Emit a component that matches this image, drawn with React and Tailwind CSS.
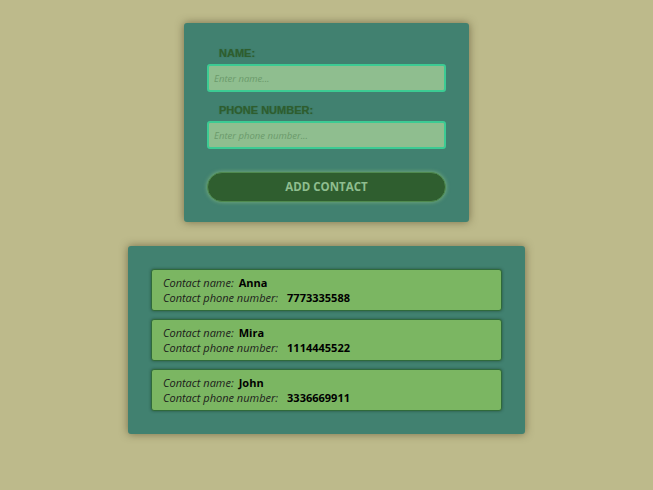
const contacts = [
  { id: 1, name: 'Anna', phone: '7773335588' },
  { id: 2, name: 'Mira', phone: '1114445522' },
  { id: 3, name: 'John', phone: '3336669911' },
]

export default function App() {
  return (
    <div className="min-h-[490px] bg-[#bdba8b] pt-[23px] flex flex-col items-center gap-[24px] font-['Open_Sans',sans-serif]">
      <form className="w-[285px] bg-[#418170] rounded-[3px] shadow-[0_0_8px_rgba(60,50,20,0.55)] px-[23px] pt-[23px] pb-[20px] flex flex-col">
        <label className="pl-3 text-[11px] leading-[14px] font-bold text-[#2e5e2e] font-['Liberation_Sans',Arial,sans-serif] [text-shadow:0_0_1px_rgba(40,80,40,0.5)] mb-[4px]">
          NAME:
        </label>
        <input
          type="text"
          placeholder="Enter name..."
          className="h-[28px] w-full bg-[#8fbe8f] border-2 border-[#3ccb93] rounded-[3px] px-[5px] text-[9.5px] italic font-['Open_Sans',sans-serif] placeholder:text-[#6b9a6b] outline-none"
        />
        <label className="mt-[11px] pl-3 text-[11px] leading-[14px] font-bold text-[#2e5e2e] font-['Liberation_Sans',Arial,sans-serif] [text-shadow:0_0_1px_rgba(40,80,40,0.5)] mb-[4px]">
          PHONE NUMBER:
        </label>
        <input
          type="text"
          placeholder="Enter phone number..."
          className="h-[28px] w-full bg-[#8fbe8f] border-2 border-[#3ccb93] rounded-[3px] px-[5px] text-[9.5px] italic font-['Open_Sans',sans-serif] placeholder:text-[#6b9a6b] outline-none"
        />
        <button
          type="button"
          className="mt-[23px] h-[30px] w-full rounded-full bg-[#2f5e2f] border border-[#4f8a4f] shadow-[0_0_4px_rgba(150,200,130,0.7)] text-[11.5px] font-bold text-[#8fbe8f]"
        >
          ADD CONTACT
        </button>
      </form>

      <div className="w-[397px] bg-[#418170] rounded-[3px] shadow-[0_0_8px_rgba(60,50,20,0.55)] p-[23px] flex flex-col gap-[8px]">
        {contacts.map((c) => (
          <div
            key={c.id}
            className="bg-[#7bb662] border border-[#2f6a3a] rounded-[3px] shadow-[0_0_3px_rgba(20,50,30,0.6)] px-[11px] py-[5px] text-[11px] leading-[15px] text-black"
          >
            <p>
              <span className="italic text-[#1b1b1b]">Contact name:</span>
              <span className="ml-[5px] font-bold">{c.name}</span>
            </p>
            <p>
              <span className="italic text-[#1b1b1b]">Contact phone number:</span>
              <span className="ml-[9px] font-bold">{c.phone}</span>
            </p>
          </div>
        ))}
      </div>
    </div>
  )
}
